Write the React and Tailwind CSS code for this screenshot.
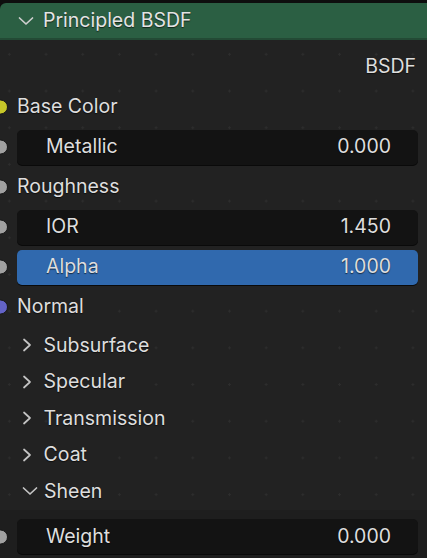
import React from 'react';

const Socket = ({ color }) => (
  <span
    className={`absolute left-[-7px] top-1/2 -translate-y-1/2 w-[15px] h-[15px] rounded-full border-[1.5px] border-[#181818] ${color}`}
  />
);

const ChevronRight = () => (
  <svg width="12" height="16" viewBox="0 0 12 16" className="shrink-0">
    <path d="M3 2.5 L9 8 L3 13.5" fill="none" stroke="#c4c4c4" strokeWidth="1.7" strokeLinecap="round" strokeLinejoin="round" />
  </svg>
);

const ChevronDown = ({ color = '#c4c4c4' }) => (
  <svg width="18" height="12" viewBox="0 0 18 12" className="shrink-0">
    <path d="M2.5 3 L9 9 L15.5 3" fill="none" stroke={color} strokeWidth="1.7" strokeLinecap="round" strokeLinejoin="round" />
  </svg>
);

const Field = ({ label, value, active }) => (
  <div
    className={`flex items-center justify-between w-full h-[35px] rounded-[5px] pl-[29px] pr-[27px] shadow-[0_1px_0_#0a0a0a] ${
      active ? 'bg-[#3069ae]' : 'bg-[#131313]'
    }`}
  >
    <span>{label}</span>
    <span>{value}</span>
  </div>
);

const SocketRow = ({ color, children }) => (
  <div className="relative flex items-center h-[40px] pl-[17px] pr-[9px]">
    <Socket color={color} />
    {children}
  </div>
);

const PanelRow = ({ label, open }) => (
  <div className="flex items-center h-[36.5px] gap-[10.5px] pl-[21px]">
    {open ? <ChevronDown /> : <ChevronRight />}
    <span className={open ? '-ml-[5.5px]' : ''}>{label}</span>
  </div>
);

const App = () => {
  return (
    <div
      className="w-[427px] h-[558px] overflow-hidden bg-[#0e0e0e] pt-[3px] text-[19.5px] text-[#dedede] [text-shadow:0_1px_1px_rgba(0,0,0,0.6)]"
      style={{ fontFamily: 'Inter, "Noto Sans", sans-serif' }}
    >
      <div className="flex items-center gap-[8px] h-[37px] pl-[17px] bg-[#2b5f43] border-b-2 border-[#234a35] rounded-tl-[6px] text-[#e4e4e4]">
        <ChevronDown color="#cfcfcf" />
        <span>Principled BSDF</span>
      </div>

      <div className="h-[518px] bg-[#222222] bg-[radial-gradient(circle,#2d2d2d_1px,transparent_1.2px)] bg-[size:36.7px_36.7px] bg-[position:-9px_-4px] pt-[7px]">
        <div className="flex items-center justify-end h-[40px] pr-[11px]">BSDF</div>

        <SocketRow color="bg-[#c7c729]">Base Color</SocketRow>
        <SocketRow color="bg-[#a1a1a1]">
          <Field label="Metallic" value="0.000" />
        </SocketRow>
        <SocketRow color="bg-[#a1a1a1]">Roughness</SocketRow>
        <SocketRow color="bg-[#a1a1a1]">
          <Field label="IOR" value="1.450" />
        </SocketRow>
        <SocketRow color="bg-[#a1a1a1]">
          <Field label="Alpha" value="1.000" active />
        </SocketRow>
        <SocketRow color="bg-[#6363c7]">Normal</SocketRow>

        <PanelRow label="Subsurface" />
        <PanelRow label="Specular" />
        <PanelRow label="Transmission" />
        <PanelRow label="Coat" />
        <PanelRow label="Sheen" open />

        <div className="bg-[#1e1e1e] pt-[9px] pb-[10px]">
          <div className="relative flex items-center h-[36px] pl-[17px] pr-[9px]">
            <Socket color="bg-[#a1a1a1]" />
            <Field label="Weight" value="0.000" />
          </div>
        </div>
      </div>
    </div>
  );
};

export default App;
